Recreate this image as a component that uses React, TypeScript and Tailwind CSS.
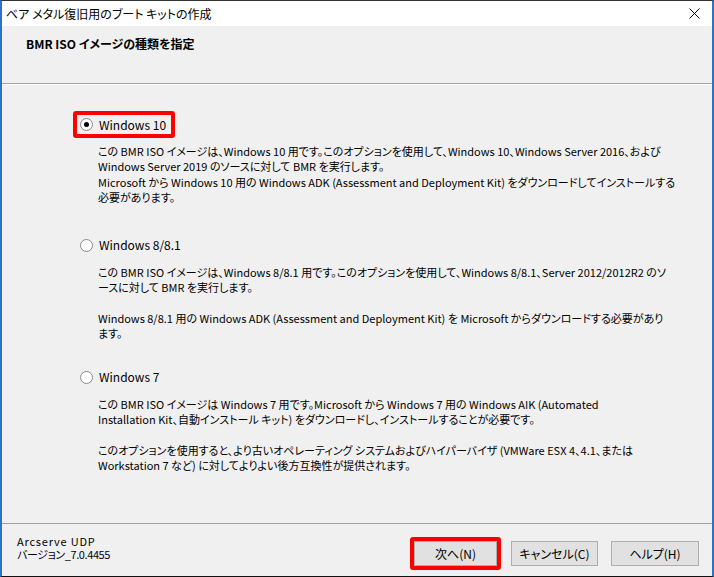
import React from "react";

const jp = { fontFamily: '"Noto Sans CJK JP", "Noto Sans", sans-serif' };

function Radio({ checked }: { checked?: boolean }) {
  return (
    <span className="flex h-[13px] w-[13px] items-center justify-center rounded-full border border-[#8a8a8a] bg-white">
      {checked && <span className="h-[5px] w-[5px] rounded-full bg-black" />}
    </span>
  );
}

function Option({
  label,
  checked,
  highlight,
  lines,
  className,
}: {
  label: string;
  checked?: boolean;
  highlight?: boolean;
  lines: string[];
  className?: string;
}) {
  return (
    <div className={className}>
      <div
        className={
          "ml-[71px] flex h-[27px] w-fit items-center gap-[6px] rounded-[3px] border-4 pl-[3px] pr-[5px] " +
          (highlight ? "border-[#ff0000]" : "border-transparent")
        }
      >
        <Radio checked={checked} />
        <span className="text-[12px] leading-[16px]">{label}</span>
      </div>
      <div className="ml-[96px] mt-[6px] whitespace-nowrap text-[11px] leading-[15.4px]">
        {lines.map((l, i) => (
          <div key={i} className="h-[15.4px]">
            {l}
          </div>
        ))}
      </div>
    </div>
  );
}

export default function App() {
  return (
    <div
      style={jp}
      className="flex h-[577px] w-[714px] flex-col overflow-hidden border-x-2 border-t border-b border-x-[#2a73c9] border-t-[#333] border-b-[#111] bg-[#f0f0f0] text-black [font-feature-settings:'palt']"
    >
      {/* title bar */}
      <div className="flex h-[25px] shrink-0 items-center justify-between bg-white pl-[4px] pr-[12px] text-[12px] leading-[16px]">
        <div>ベア メタル復旧用のブート キットの作成</div>
        <svg width="11" height="11" viewBox="0 0 11 11">
          <path d="M0.5 0.5 L10.5 10.5 M10.5 0.5 L0.5 10.5" stroke="#000" strokeWidth="1" />
        </svg>
      </div>

      {/* header */}
      <div className="h-[58px] shrink-0 border-b border-[#a0a0a0] pl-[24px] pt-[10px] text-[12px] font-bold leading-[16px]">
        <div>BMR ISO イメージの種類を指定</div>
      </div>

      {/* body */}
      <div className="min-h-0 flex-1 border-t border-white pt-[26px]">
        <Option
          label="Windows 10"
          checked
          highlight
          lines={[
            "この BMR ISO イメージは、Windows 10 用です。このオプションを使用して、Windows 10、Windows Server 2016、および",
            "Windows Server 2019 のソースに対して BMR を実行します。",
            "Microsoft から Windows 10 用の Windows ADK (Assessment and Deployment Kit) をダウンロードしてインストールする",
            "必要があります。",
          ]}
        />

        <Option
          label="Windows 8/8.1"
          className="mt-[26px]"
          lines={[
            "この BMR ISO イメージは、Windows 8/8.1 用です。このオプションを使用して、Windows 8/8.1、Server 2012/2012R2 のソ",
            "ースに対して BMR を実行します。",
            "",
            "Windows 8/8.1 用の Windows ADK (Assessment and Deployment Kit) を Microsoft からダウンロードする必要があり",
            "ます。",
          ]}
        />

        <Option
          label="Windows 7"
          className="mt-[22px]"
          lines={[
            "この BMR ISO イメージは Windows 7 用です。Microsoft から Windows 7 用の Windows AIK (Automated",
            "Installation Kit、自動インストール キット) をダウンロードし、インストールすることが必要です。",
            "",
            "このオプションを使用すると、より古いオペレーティング システムおよびハイパーバイザ (VMWare ESX 4、4.1、または",
            "Workstation 7 など) に対してよりよい後方互換性が提供されます。",
          ]}
        />
      </div>

      {/* footer */}
      <div className="flex h-[53px] shrink-0 items-start justify-between border-t border-[#a0a0a0] pl-[15px] pr-[13px]">
        <div className="pt-[11px] leading-[13px]">
          <div className="text-[11px] tracking-[0.8px]">Arcserve UDP</div>
          <div className="text-[11px] tracking-[-0.4px]">バージョン_7.0.4455</div>
        </div>
        <div className="flex items-center pt-[13px] text-[12px] leading-[16px]">
          <div className="rounded-[3px] border-4 border-[#ff0000]">
            <button className="block h-[25px] w-[83px] border border-[#adadad] bg-[#e1e1e1]">次へ(N)</button>
          </div>
          <button className="ml-[10px] h-[25px] w-[87px] border border-[#adadad] bg-[#e1e1e1]">キャンセル(C)</button>
          <button className="ml-[13px] h-[25px] w-[88px] border border-[#adadad] bg-[#e1e1e1]">ヘルプ(H)</button>
        </div>
      </div>
    </div>
  );
}
